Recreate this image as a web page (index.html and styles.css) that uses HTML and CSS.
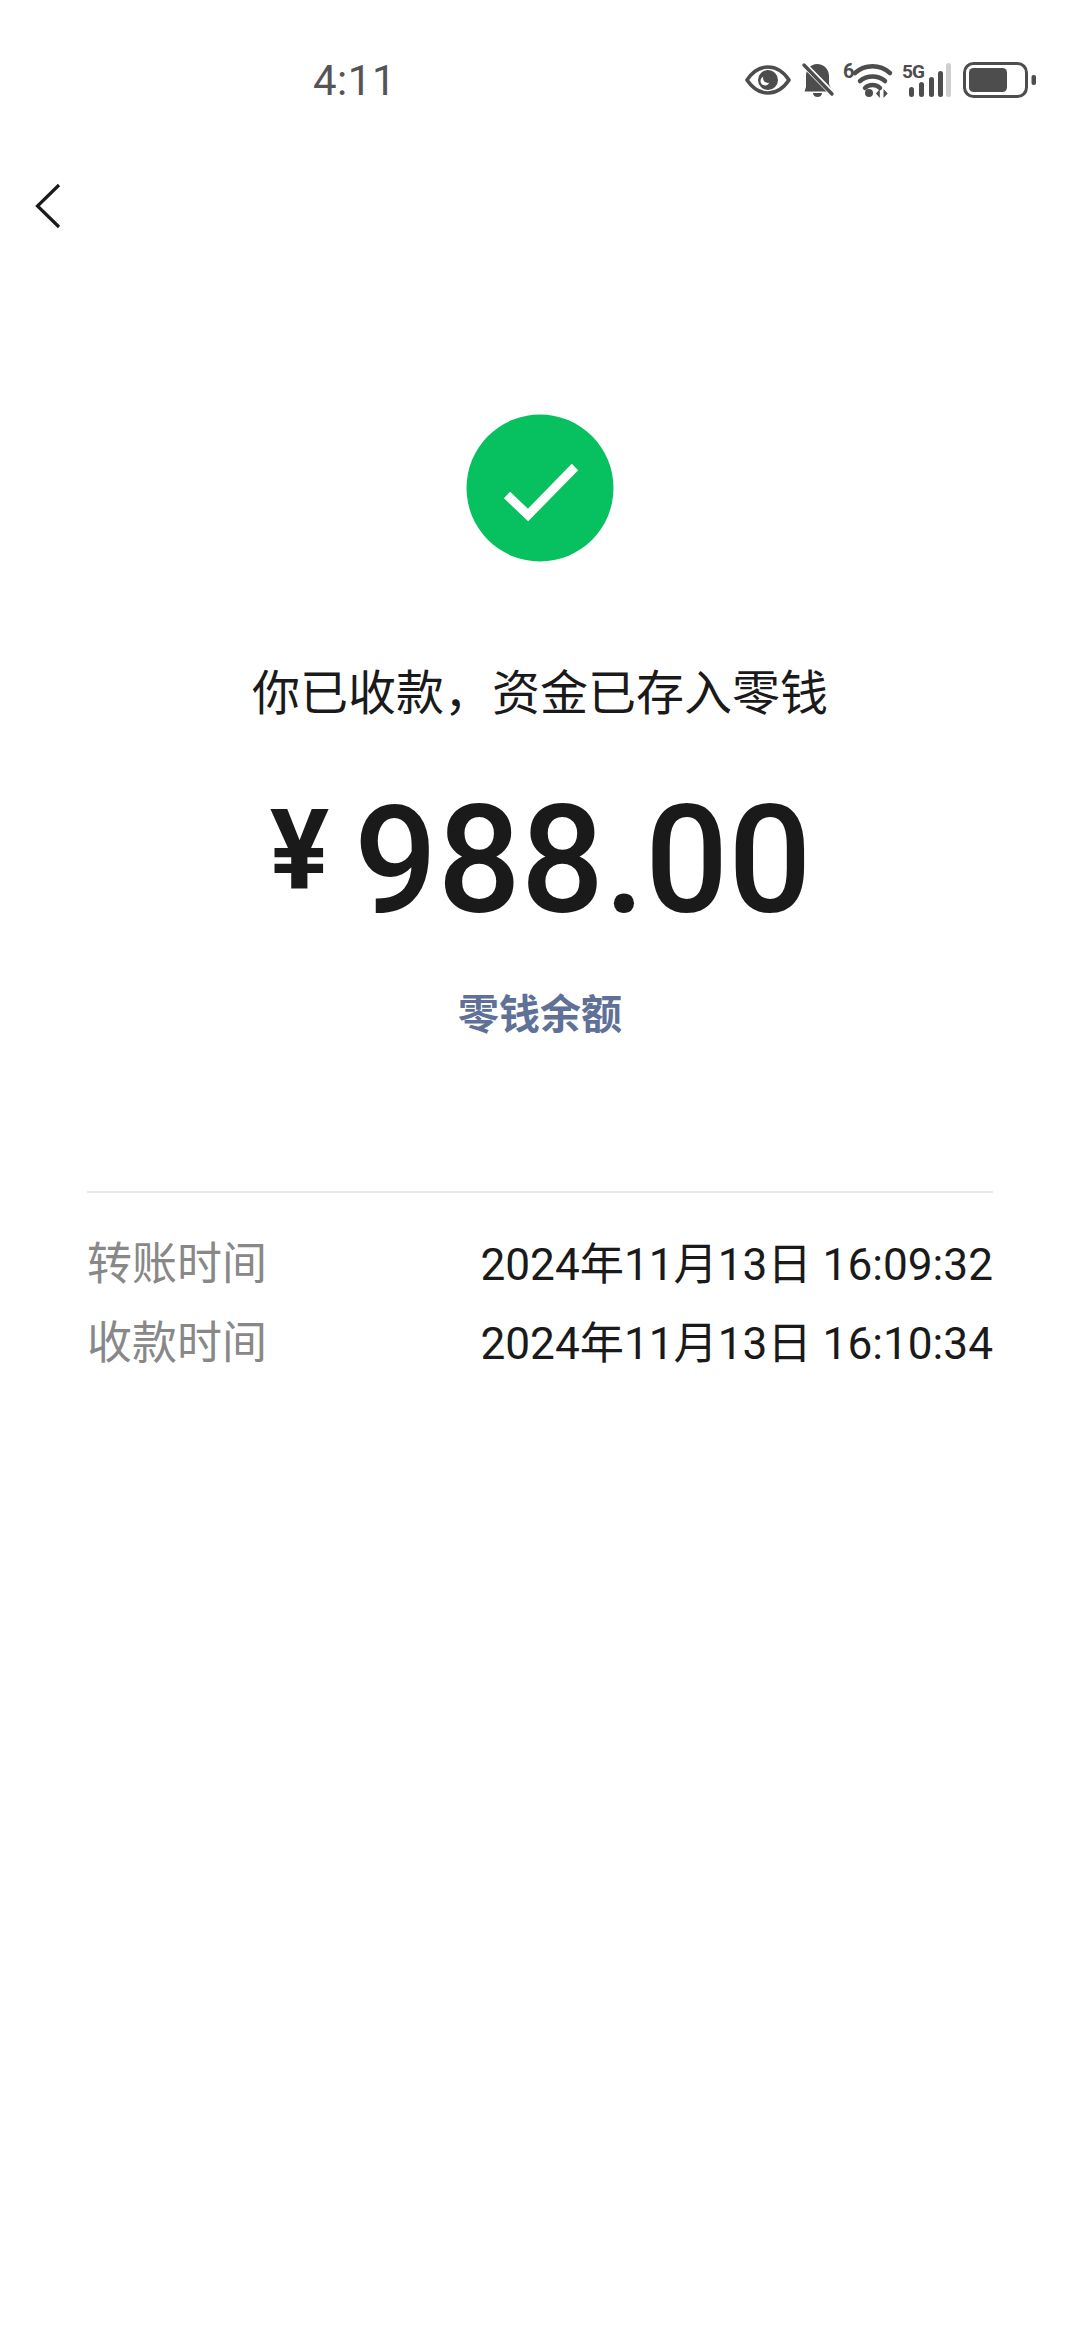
FILE: index.html
```html
<!DOCTYPE html>
<html lang="zh-CN">
<head>
<meta charset="utf-8">
<title>收款详情</title>
<link rel="stylesheet" href="styles.css">
</head>
<body>
<div class="page">
  <header class="statusbar">
    <span class="clock">4:11</span>
    <div class="status-icons">
      <svg class="ic-eye" width="46" height="30" viewBox="0 0 46 30">
        <path d="M2 15C8 6 15 2 23 2s15 4 21 13c-6 9-13 13-21 13S8 24 2 15Z" fill="none" stroke="#4d4d4d" stroke-width="3.600" stroke-linejoin="round"/>
        <circle cx="23" cy="15" r="10" fill="#4d4d4d"/>
        <circle cx="20" cy="16" r="4.500" fill="#fff"/>
        <circle cx="23" cy="13" r="5" fill="#4d4d4d"/>
      </svg>
      <svg class="ic-bell" width="30" height="34" viewBox="0 0 30 34">
        <path d="M14 1C21 1 26 6 26 13V21L29.500 28.500H1.500L3 24V13C3 6 8 1 14 1Z" fill="#4d4d4d"/>
        <path d="M10 30h9c0 2.500-2 4-4.500 4S10 32.500 10 30Z" fill="#4d4d4d"/>
        <path d="M1 1.500 29 30" stroke="#fff" stroke-width="6"/>
        <path d="M1 2 29 31" stroke="#4d4d4d" stroke-width="3.400" stroke-linecap="round"/>
      </svg>
      <svg class="ic-wifi" width="49" height="34" viewBox="0 0 49 34">
        <text class="sig-six" x="0" y="15">6</text>
        <path d="M12 10C22 1 37 1 47 10" fill="none" stroke="#4d4d4d" stroke-width="4.500" stroke-linecap="round"/>
        <path d="M17 18C24 12 35 12 42 18" fill="none" stroke="#4d4d4d" stroke-width="4.500" stroke-linecap="round"/>
        <path d="M22 25C26 21 33 21 37 25" fill="none" stroke="#4d4d4d" stroke-width="4.500" stroke-linecap="round"/>
        <circle cx="26" cy="30" r="4" fill="#4d4d4d"/>
        <path d="M33 30.500l3.800-4.500v9ZM40.500 26l4.200 4.500-4.200 4.500Z" fill="#4d4d4d"/>
      </svg>
      <svg class="ic-cell" width="49" height="34" viewBox="0 0 49 34">
        <text class="sig-five" x="0" y="15">5G</text>
        <rect x="7" y="24" width="5" height="10" rx="2.500" fill="#4d4d4d"/>
        <rect x="17" y="19" width="5" height="15" rx="2.500" fill="#4d4d4d"/>
        <rect x="27" y="14" width="5" height="20" rx="2.500" fill="#4d4d4d"/>
        <rect x="36" y="8" width="5" height="26" rx="2.500" fill="#4d4d4d"/>
        <rect x="44" y="0" width="5" height="34" rx="2.500" fill="#cfcfcf"/>
      </svg>
      <svg class="ic-batt" width="73" height="36" viewBox="0 0 73 36">
        <rect x="1.500" y="1.500" width="62" height="33" rx="9" fill="none" stroke="#4d4d4d" stroke-width="3"/>
        <rect x="6" y="6" width="38" height="24" rx="4.500" fill="#4d4d4d"/>
        <rect x="68.500" y="13" width="4.500" height="10" rx="2" fill="#4d4d4d"/>
      </svg>
    </div>
  </header>

  <nav class="navbar">
    <svg width="26" height="46" viewBox="0 0 26 46">
      <path d="M24 2 2.500 23 24 44" fill="none" stroke="#1a1a1a" stroke-width="3.200"/>
    </svg>
  </nav>

  <main class="result">
    <svg class="check" width="148" height="148" viewBox="0 0 148 148">
      <circle cx="74" cy="74" r="73.500" fill="#07c160"/>
      <path d="M41 81 62 101 109 53" fill="none" stroke="#fff" stroke-width="9"/>
    </svg>
    <h1 class="title">你已收款，资金已存入零钱</h1>
    <div class="amount"><span class="currency">¥</span><span class="value">988.00</span></div>
    <a class="balance">零钱余额</a>
  </main>

  <section class="details">
    <div class="row"><span class="label">转账时间</span><span class="time">2024年11月13日 16:09:32</span></div>
    <div class="row"><span class="label">收款时间</span><span class="time">2024年11月13日 16:10:34</span></div>
  </section>
</div>
</body>
</html>
```
FILE: styles.css
```css
* { box-sizing: border-box; }
html, body { margin: 0; padding: 0; background: #fff; }
body {
  width: 1080px;
  height: 2340px;
  font-family: Roboto, "Noto Sans CJK SC", sans-serif;
  overflow: hidden;
}
.page { display: flex; flex-direction: column; }

.statusbar {
  height: 160px;
  display: flex;
  justify-content: space-between;
  align-items: flex-start;
  padding: 53px 44px 0 313px;
}
.clock {
  font-size: 42px;
  line-height: 56px;
  color: #555;
  letter-spacing: 0.5px;
}
.status-icons {
  display: flex;
  align-items: center;
  gap: 10px;
  padding-top: 9px;
}
.status-icons svg { overflow: visible; }
.ic-eye, .ic-cell { margin-right: 2px; }
.sig-six, .sig-five {
  font-family: Roboto, sans-serif;
  font-weight: 700;
  fill: #4d4d4d;
}
.sig-six { font-size: 20px; }
.sig-five { font-size: 19px; letter-spacing: -1px; }

.navbar {
  height: 72px;
  padding: 23px 0 0 35px;
  display: flex;
  align-items: flex-start;
}

.result {
  display: flex;
  flex-direction: column;
  align-items: center;
  padding-top: 182px;
}
.check { display: block; }
.title {
  margin: 100px 0 0;
  font-size: 48px;
  line-height: 64px;
  font-weight: 400;
  color: #1a1a1a;
}
.amount {
  margin-top: 40px;
  height: 190px;
  display: flex;
  align-items: flex-start;
  color: #1a1a1a;
}
.currency {
  font-size: 111px;
  font-weight: 700;
  line-height: 111px;
  margin-top: 29px;
  margin-right: 25px;
}
.value {
  font-size: 150px;
  line-height: 190px;
  font-weight: 500;
  display: inline-block;
  transform: scaleX(.978);
  transform-origin: left center;
  width: 456px;
}
.balance {
  margin-top: 31px;
  font-size: 41px;
  line-height: 56px;
  font-weight: 700;
  color: #5f7196;
}

.details {
  margin: 148px 87px 0;
  border-top: 2px solid #eaeaea;
  padding-top: 28px;
}
.row {
  display: flex;
  justify-content: space-between;
  align-items: center;
  height: 79px;
}
.label { font-size: 45px; color: #888; }
.time { font-size: 44.2px; color: #1a1a1a; }
```
